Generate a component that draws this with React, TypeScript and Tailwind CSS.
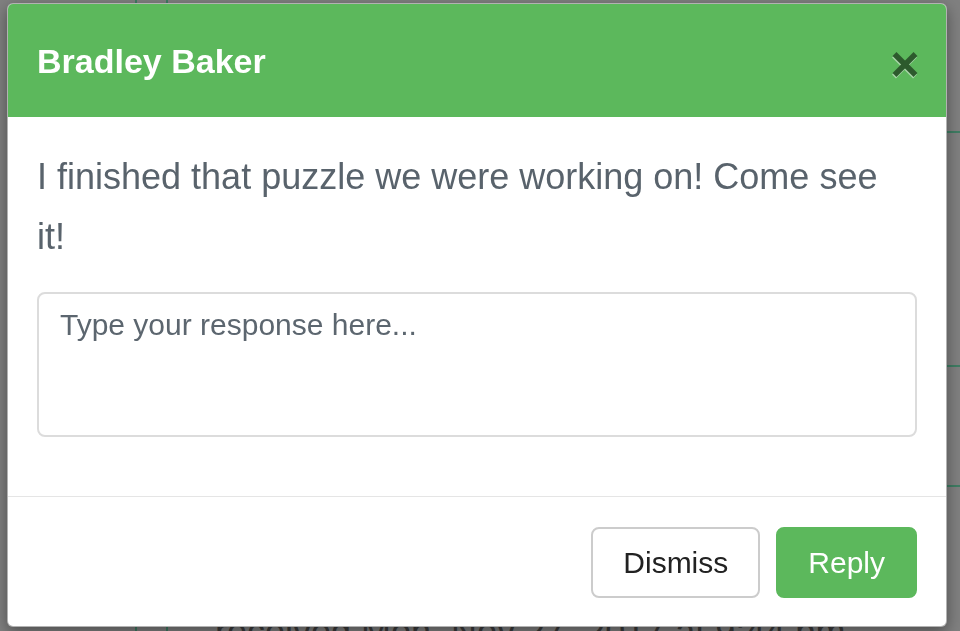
import React from "react";

const CloseIcon = () => (
  <svg width="28" height="28" viewBox="0 0 28 28" aria-hidden="true">
    <g stroke="#a9d6a9" strokeWidth="5.5" strokeLinecap="butt">
      <line x1="3" y1="4.5" x2="24" y2="25.5" />
      <line x1="24" y1="4.5" x2="3" y2="25.5" />
    </g>
    <g stroke="#2d5a2d" strokeWidth="5.5" strokeLinecap="butt">
      <line x1="3.5" y1="3" x2="24.5" y2="24" />
      <line x1="24.5" y1="3" x2="3.5" y2="24" />
    </g>
  </svg>
);

const App = () => {
  return (
    <div className="relative h-[631px] w-full overflow-hidden bg-[#808080] font-['Liberation_Sans',Arial,sans-serif]">
      {/* page behind the backdrop */}
      <div className="flex h-full">
        <div className="w-[135px] shrink-0" />
        <div className="w-[33px] shrink-0 border-x-2 border-[#3f7d63]" />
        <div className="flex flex-1 flex-col">
          <div className="h-[133px] shrink-0 border-b-2 border-[#3f7d63]" />
          <div className="h-[234px] shrink-0 border-b-2 border-[#3f7d63]" />
          <div className="h-[120px] shrink-0 border-b-2 border-[#3f7d63]" />
          <div className="shrink-0 pl-[47px] pt-[123px] text-[36px] leading-[1.2] text-[#3b3b3b] whitespace-nowrap">
            received Mon, Nov 27, 2017 at 9:44 pm
          </div>
        </div>
      </div>

      {/* modal */}
      <div className="fixed inset-0 pl-[7px] pt-[3px]">
        <div className="w-[940px] overflow-hidden rounded-[6px] border border-black/30 bg-white shadow-[0_5px_15px_rgba(0,0,0,0.4)]">
          <div className="flex h-[113px] items-center justify-between bg-[#5cb85c] pl-[29px] pr-[27px]">
            <h4 className="text-[34px] font-bold leading-none text-white">Bradley Baker</h4>
            <button className="mt-[8px] cursor-pointer">
              <CloseIcon />
            </button>
          </div>

          <div className="px-[29px] pb-[59px] pt-[30px]">
            <p className="mb-[25px] max-w-[866px] text-[36px] leading-[60px] text-[#59636c]">
              I finished that puzzle we were working on! Come see it!
            </p>
            <textarea
              className="block h-[145px] w-full resize-none rounded-[8px] border-2 border-[#dcdcdc] px-[21px] pt-[10px] text-[30px] leading-[1.4] text-[#59636c] outline-none placeholder:text-[#5c666f]"
              placeholder="Type your response here..."
            />
          </div>

          <div className="flex justify-end gap-[16px] border-t border-[#e5e5e5] pl-[29px] pr-[29px] pb-[28px] pt-[30px]">
            <button className="h-[71px] rounded-[8px] border-2 border-[#cccccc] bg-white px-[30px] text-[30px] text-[#222222]">
              Dismiss
            </button>
            <button className="h-[71px] rounded-[8px] border-2 border-[#5cb85c] bg-[#5cb85c] px-[30px] text-[30px] text-white">
              Reply
            </button>
          </div>
        </div>
      </div>
    </div>
  );
};

export default App;
